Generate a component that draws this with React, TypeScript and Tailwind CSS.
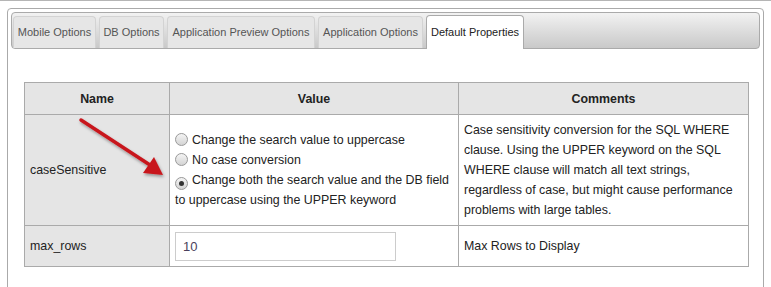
const tabs = [
  { label: 'Mobile Options', w: 'w-[83px]' },
  { label: 'DB Options', w: 'w-[65px]' },
  { label: 'Application Preview Options', w: 'w-[148px]' },
  { label: 'Application Options', w: 'w-[105px]' },
  { label: 'Default Properties', w: 'w-[98px]' },
];

function Radio({ checked }: { checked?: boolean }) {
  return (
    <span className="mr-[4px] inline-flex h-[13px] w-[13px] items-center justify-center rounded-full border border-[#9a9a9a] bg-gradient-to-b from-[#f4f4f4] to-[#d4d4d4] align-[-2px]">
      {checked && <span className="h-[5px] w-[5px] rounded-full bg-[#333]" />}
    </span>
  );
}

export default function App() {
  return (
    <div className="relative h-[287px] w-[771px] overflow-hidden border-t border-[#b5b5b5] bg-white font-['Liberation_Sans',Arial,sans-serif]">
      {/* Outer panel */}
      <div className="ml-[7px] mt-[7px] h-[300px] w-[757px] rounded-[4px] border border-[#aaa] p-[3px]">
        {/* Tab bar */}
        <div className="flex h-[37px] items-end gap-[3px] rounded-[4px] border border-[#aaa] bg-gradient-to-b from-[#f2f2f2] to-[#c9c9c9] pl-[1px]">
          {tabs.map((t) => {
            const active = t.label === 'Default Properties';
            return (
              <div
                key={t.label}
                className={
                  active
                    ? `relative -mb-px flex h-[34px] ${t.w} items-center justify-center rounded-t-[4px] border border-b-0 border-[#aaa] bg-white text-[11px] text-[#222]`
                    : `flex h-[32px] ${t.w} items-center justify-center rounded-t-[4px] border border-b-0 border-[#d3d3d3] bg-[#e6e6e6] text-[11px] text-[#555]`
                }
              >
                {t.label}
              </div>
            );
          })}
        </div>

        {/* Properties table */}
        <table className="ml-[13px] mt-[33px] w-[725px] border-collapse text-[12.4px] leading-[20px] text-[#222]">
          <thead>
            <tr className="h-[32px] bg-[#e5e5e5]">
              <th className="w-[145px] border border-[#aaa] font-bold">Name</th>
              <th className="w-[289px] border border-[#aaa] font-bold">Value</th>
              <th className="border border-[#aaa] font-bold">Comments</th>
            </tr>
          </thead>
          <tbody>
            <tr>
              <td className="border border-[#aaa] bg-[#e5e5e5] px-[5px] align-middle">caseSensitive</td>
              <td className="border border-[#aaa] px-[5px] align-middle">
                <div><Radio />Change the search value to uppercase</div>
                <div><Radio />No case conversion</div>
                <div><Radio checked />Change both the search value and the DB field to uppercase using the UPPER keyword</div>
              </td>
              <td className="border border-[#aaa] px-[5px] py-[5px] align-middle">
                Case sensitivity conversion for the SQL WHERE clause. Using the UPPER keyword on the SQL WHERE clause will match all text strings, regardless of case, but might cause performance problems with large tables.
              </td>
            </tr>
            <tr className="h-[41px]">
              <td className="border border-[#aaa] bg-[#e5e5e5] px-[5px] align-middle">max_rows</td>
              <td className="border border-[#aaa] px-[5px] align-middle">
                <input
                  readOnly
                  value="10"
                  className="block h-[29px] w-[221px] border border-[#ccc] px-[7px] text-[13px] text-[#4a3f5c] outline-none"
                />
              </td>
              <td className="border border-[#aaa] px-[5px] align-middle">Max Rows to Display</td>
            </tr>
          </tbody>
        </table>
      </div>

      {/* Annotation arrow */}
      <svg className="absolute left-0 top-0" width="771" height="287">
        <defs>
          <filter id="sh" x="-20%" y="-20%" width="140%" height="140%">
            <feDropShadow dx="1" dy="2" stdDeviation="1.5" floodColor="#000" floodOpacity="0.35" />
          </filter>
        </defs>
        <g filter="url(#sh)">
          <line x1="81" y1="119" x2="150" y2="164" stroke="#c8171c" strokeWidth="3.5" strokeLinecap="round" />
          <polygon points="163,174 143,172 154,156" fill="#c8171c" />
        </g>
      </svg>
    </div>
  );
}
